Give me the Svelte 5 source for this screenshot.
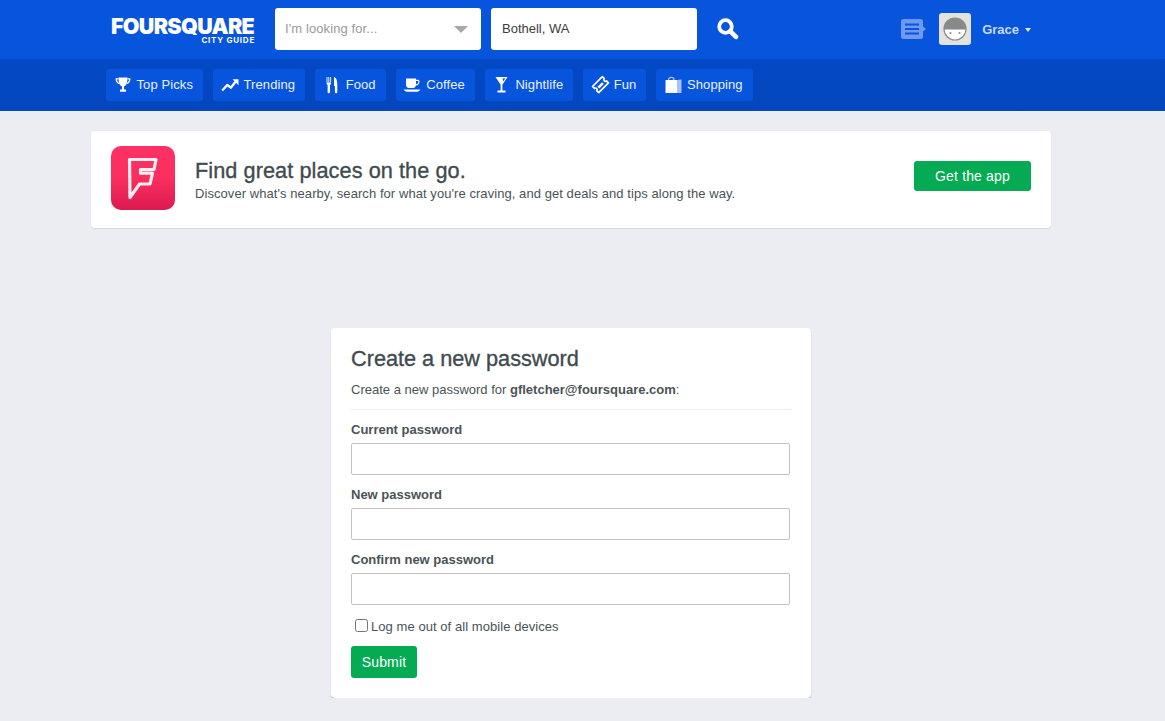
<script>
  const navItems = [
    { label: 'Top Picks', icon: 'trophy' },
    { label: 'Trending', icon: 'trend' },
    { label: 'Food', icon: 'food' },
    { label: 'Coffee', icon: 'coffee' },
    { label: 'Nightlife', icon: 'martini' },
    { label: 'Fun', icon: 'ticket' },
    { label: 'Shopping', icon: 'bag' }
  ];
  const fields = ['Current password', 'New password', 'Confirm new password'];
</script>

<header class="top">
  <div class="logo">
    <span class="logo-main">FOURSQUARE</span>
    <span class="logo-sub">CITY GUIDE</span>
  </div>
  <div class="search-box what">
    <span class="placeholder">I'm looking for...</span>
    <span class="tri"></span>
  </div>
  <div class="search-box where">Bothell, WA</div>
  <svg class="search-icon" width="22" height="22" viewBox="0 0 22 22" aria-hidden="true">
    <circle cx="8.500" cy="8.500" r="6.300" fill="none" stroke="#fff" stroke-width="3.800" />
    <path d="M13.500 13.500L19 18.800" stroke="#fff" stroke-width="4.600" stroke-linecap="round" />
  </svg>
  <div class="spacer"></div>
  <svg class="msg" width="26" height="20" viewBox="0 0 26 20" aria-hidden="true">
    <rect x="0" y="0" width="22" height="20" rx="2.500" fill="#6f98ee" />
    <path d="M22 7.500L25 10L22 12.500Z" fill="#6f98ee" />
    <path d="M4 5.500H18M4 10H18M4 14.500H18" stroke="#0755dd" stroke-width="2" />
  </svg>
  <div class="avatar">
    <svg width="24" height="24" viewBox="0 0 24 24" aria-hidden="true">
      <circle cx="12" cy="12" r="11" fill="#fff" stroke="#88898b" stroke-width="1.200" />
      <path d="M1 12A11 11 0 0 1 23 12C23 12.500 22.900 12.500 22 12.500H2C1.100 12.500 1 12.500 1 12Z" fill="#88898b" />
      <circle cx="7.500" cy="16" r="1" fill="#88898b" />
      <circle cx="16.500" cy="16" r="1" fill="#88898b" />
    </svg>
  </div>
  <span class="user">Grace</span>
  <span class="caret"></span>
</header>

<nav class="subnav">
  {#each navItems as item}
    <a class="pill" href="#top">
      <svg class="nav-icon" width="20" height="20" viewBox="0 0 20 20" aria-hidden="true">
        {#if item.icon === 'trophy'}
          <path d="M5.500 2.500H14.500C14.500 7.500 13.500 10.500 11 11.500V14.500H13V16.800H7V14.500H9V11.500C6.500 10.500 5.500 7.500 5.500 2.500Z" fill="#fff" />
          <path d="M5.500 3.800H3.200C3.200 6.500 4.200 8 6.500 8.600M14.500 3.800H16.800C16.800 6.500 15.800 8 13.500 8.600" fill="none" stroke="#fff" stroke-width="1.300" />
        {:else if item.icon === 'trend'}
          <path d="M2.200 15.500L7.300 10L10.800 12.700L15.500 6.800" fill="none" stroke="#fff" stroke-width="2.300" stroke-linejoin="round" />
          <path d="M12.500 4.300H18.500V10.200Z" fill="#fff" />
        {:else if item.icon === 'food'}
          <path d="M5 2V7.500M6.800 2V7.500M8.600 2V7.500" stroke="#fff" stroke-width="0.900" />
          <path d="M4.600 7.500H9V9L8 10V17A1.200 1.200 0 0 1 5.600 17V10L4.600 9Z" fill="#fff" />
          <path d="M12 2C14.500 2.500 15.300 6 15.300 10V17A1.200 1.200 0 0 1 12.900 17V11H12Z" fill="#fff" />
        {:else if item.icon === 'coffee'}
          <path d="M4 3.500H14V9.500C14 12 12.500 13 11 13H7C5.500 13 4 12 4 9.500Z" fill="#fff" />
          <path d="M14 5.300H16C17.500 5.300 17.500 9.500 14 10" fill="none" stroke="#fff" stroke-width="1.200" />
          <path d="M1.500 14.500H18.500C17.500 16 16 16.800 14 16.800H6C4 16.800 2.500 16 1.500 14.500Z" fill="#fff" />
        {:else if item.icon === 'martini'}
          <path d="M4.500 2H16.500L11.400 9.800V15.500H14.500V17.500H6.500V15.500H9.600V9.800Z" fill="#fff" />
          <path d="M11.500 3.500L14.300 3.300L12.300 6.500Z" fill="#0755dd" />
        {:else if item.icon === 'ticket'}
          <path d="M2.500 11.500L12.300 1.700L14.300 3.700A1.500 1.500 0 0 0 16.500 5.900L18.500 7.900L8.700 17.700L6.700 15.700A1.500 1.500 0 0 0 4.500 13.500Z" fill="none" stroke="#fff" stroke-width="1.700" stroke-linejoin="round" />
          <path d="M7.500 11.700L12 7.200L13.800 9L9.300 13.500Z" fill="#fff" />
        {:else}
          <path d="M2.500 5H14V18H2.500Z" fill="#fff" />
          <path d="M14 5L18.500 4.500V18H14Z" fill="#a9c2f3" />
          <path d="M5.500 5C5.500 1.500 11 1.500 11 5" fill="none" stroke="#a9c2f3" stroke-width="1.200" />
        {/if}
      </svg>
      <span class="pill-label">{item.label}</span>
    </a>
  {/each}
</nav>

<main class="page">
  <section class="promo">
    <svg class="app-icon" width="64" height="64" viewBox="0 0 64 64" aria-hidden="true">
      <defs>
        <linearGradient id="appg" x1="0" y1="0" x2="0" y2="1">
          <stop offset="0" stop-color="#fd3163" />
          <stop offset="0.5" stop-color="#fb2e60" />
          <stop offset="1" stop-color="#db1a50" />
        </linearGradient>
      </defs>
      <rect width="64" height="64" rx="10" fill="url(#appg)" />
      <path d="M18.500 13.500H45L43 23.500H29.500V27.200H41.500L39 38H28.500L19 51.500Z" fill="none" stroke="#ffeef2" stroke-width="3.200" stroke-linejoin="round" />
    </svg>
    <div class="promo-text">
      <h2>Find great places on the go.</h2>
      <p>Discover what's nearby, search for what you're craving, and get deals and tips along the way.</p>
    </div>
    <button class="btn app" type="button">Get the app</button>
  </section>

  <section class="card">
    <h1>Create a new password</h1>
    <p class="intro">Create a new password for <strong>gfletcher@foursquare.com</strong>:</p>
    <hr />
    {#each fields as field}
      <label class="field">
        <span>{field}</span>
        <input type="password" />
      </label>
    {/each}
    <label class="check">
      <input type="checkbox" />
      <span>Log me out of all mobile devices</span>
    </label>
    <button class="btn submit" type="button">Submit</button>
  </section>
</main>

<style>
  :global(body) {
    margin: 0;
    background: #ebedf2;
    color: #4a5357;
    font-family: "Liberation Sans", Arial, sans-serif;
    font-size: 13px;
  }
  .top {
    height: 59px;
    background: #0755dd;
    display: flex;
    align-items: flex-start;
    padding-left: 111px;
    box-sizing: border-box;
  }
  .logo {
    width: 164px;
    height: 59px;
    display: flex;
    flex-direction: column;
    color: #fff;
    padding-top: 16px;
    box-sizing: border-box;
  }
  .logo-main {
    font-family: Inter, "Liberation Sans", sans-serif;
    font-weight: 900;
    font-size: 21.500px;
    line-height: 21px;
    letter-spacing: -0.700px;
    white-space: nowrap;
  }
  .logo-sub {
    font-family: Inter, "Liberation Sans", sans-serif;
    font-weight: 700;
    font-size: 8px;
    line-height: 7px;
    letter-spacing: 0.750px;
    width: 144px;
    text-align: right;
  }
  .search-box {
    width: 206px;
    height: 42px;
    margin-top: 8px;
    background: #fff;
    border-radius: 3px;
    display: flex;
    align-items: center;
    justify-content: space-between;
    box-sizing: border-box;
    padding: 0 13px 2px 10px;
  }
  .placeholder { color: #999; letter-spacing: 0.100px; }
  .tri {
    width: 0;
    height: 0;
    margin-top: 2px;
    border-left: 7.500px solid transparent;
    border-right: 7.500px solid transparent;
    border-top: 7.500px solid #a8a8a8;
  }
  .where {
    margin-left: 10px;
    color: #3d3d3d;
    padding-left: 11px;
  }
  .search-icon { margin: 18px 0 0 20px; }
  .spacer { flex: 1; }
  .msg { margin-top: 19px; }
  .avatar {
    width: 32px;
    height: 32px;
    margin: 13px 0 0 12px;
    background: #e2e2de;
    border-radius: 3px;
    display: flex;
    align-items: center;
    justify-content: center;
  }
  .user {
    margin: 22px 0 0 11px;
    color: #c9d9f8;
    font-weight: 700;
    line-height: 15px;
  }
  .caret {
    width: 0;
    height: 0;
    margin: 28px 134px 0 6px;
    border-left: 3.500px solid transparent;
    border-right: 3.500px solid transparent;
    border-top: 4.500px solid #e6eefc;
  }
  .subnav {
    height: 52px;
    background: linear-gradient(#0349c4, #0446bd);
    display: flex;
    gap: 10px;
    padding: 10px 0 0 106px;
    box-sizing: border-box;
  }
  .pill {
    height: 32px;
    background: #0755dd;
    border-radius: 3px;
    color: #eaf1fd;
    text-decoration: none;
    display: flex;
    align-items: center;
    gap: 4px;
    padding: 0 10px 0 6.500px;
    box-sizing: border-box;
  }
  .pill-label { letter-spacing: 0.100px; margin-bottom: 2px; }
  .page {
    width: 960px;
    margin-left: 91px;
    padding-top: 20px;
  }
  .promo {
    height: 97px;
    background: #fff;
    border-radius: 4px;
    box-shadow: 0 1px 1px rgba(0, 0, 0, 0.1);
    display: flex;
    align-items: flex-start;
    padding: 15px 20px 0;
    box-sizing: border-box;
  }
  .promo-text { flex: 1; margin: 13px 0 0 20px; }
  h2, h1 {
    margin: 0;
    font-size: 21.700px;
    font-weight: 400;
    color: #3f4b50;
    line-height: 24px;
    -webkit-text-stroke: 0.350px #3f4b50;
  }
  h2 { letter-spacing: 0.070px; }
  .promo-text p { margin: 3px 0 0; line-height: 16px; letter-spacing: 0.065px; }
  .btn {
    background: #05ab52;
    color: #fff;
    border: 0;
    border-radius: 3px;
    font: inherit;
    font-size: 14px;
    letter-spacing: 0.150px;
    padding: 0;
  }
  .app { width: 117px; height: 30px; margin-top: 15px; }
  .card {
    width: 480px;
    height: 370px;
    margin: 100px 0 0 240px;
    background: #fff;
    border-radius: 4px;
    box-shadow: 0 1px 1px rgba(0, 0, 0, 0.3);
    box-sizing: border-box;
    padding: 19px 20px 0;
  }
  .intro { margin: 11px 0 0; line-height: 16px; }
  hr {
    margin: 11px 0 0;
    border: 0;
    border-top: 1px solid #eee;
  }
  .field { display: block; padding-top: 12px; }
  .field span {
    display: block;
    font-weight: 700;
    line-height: 16px;
    margin-bottom: 5px;
  }
  .field input {
    display: block;
    width: 439px;
    height: 32px;
    box-sizing: border-box;
    border: 1px solid #bfc3c6;
    border-radius: 2px;
    background: #fff;
    padding: 0 8px;
    margin: 0;
  }
  .check {
    display: flex;
    align-items: center;
    margin: 13px 0 0 4px;
    height: 16px;
    letter-spacing: 0.060px;
  }
  .check input { margin: 0 3px 2px 0; width: 13px; height: 13px; }
  .submit {
    display: block;
    width: 66px;
    height: 32px;
    margin-top: 12px;
  }
</style>
